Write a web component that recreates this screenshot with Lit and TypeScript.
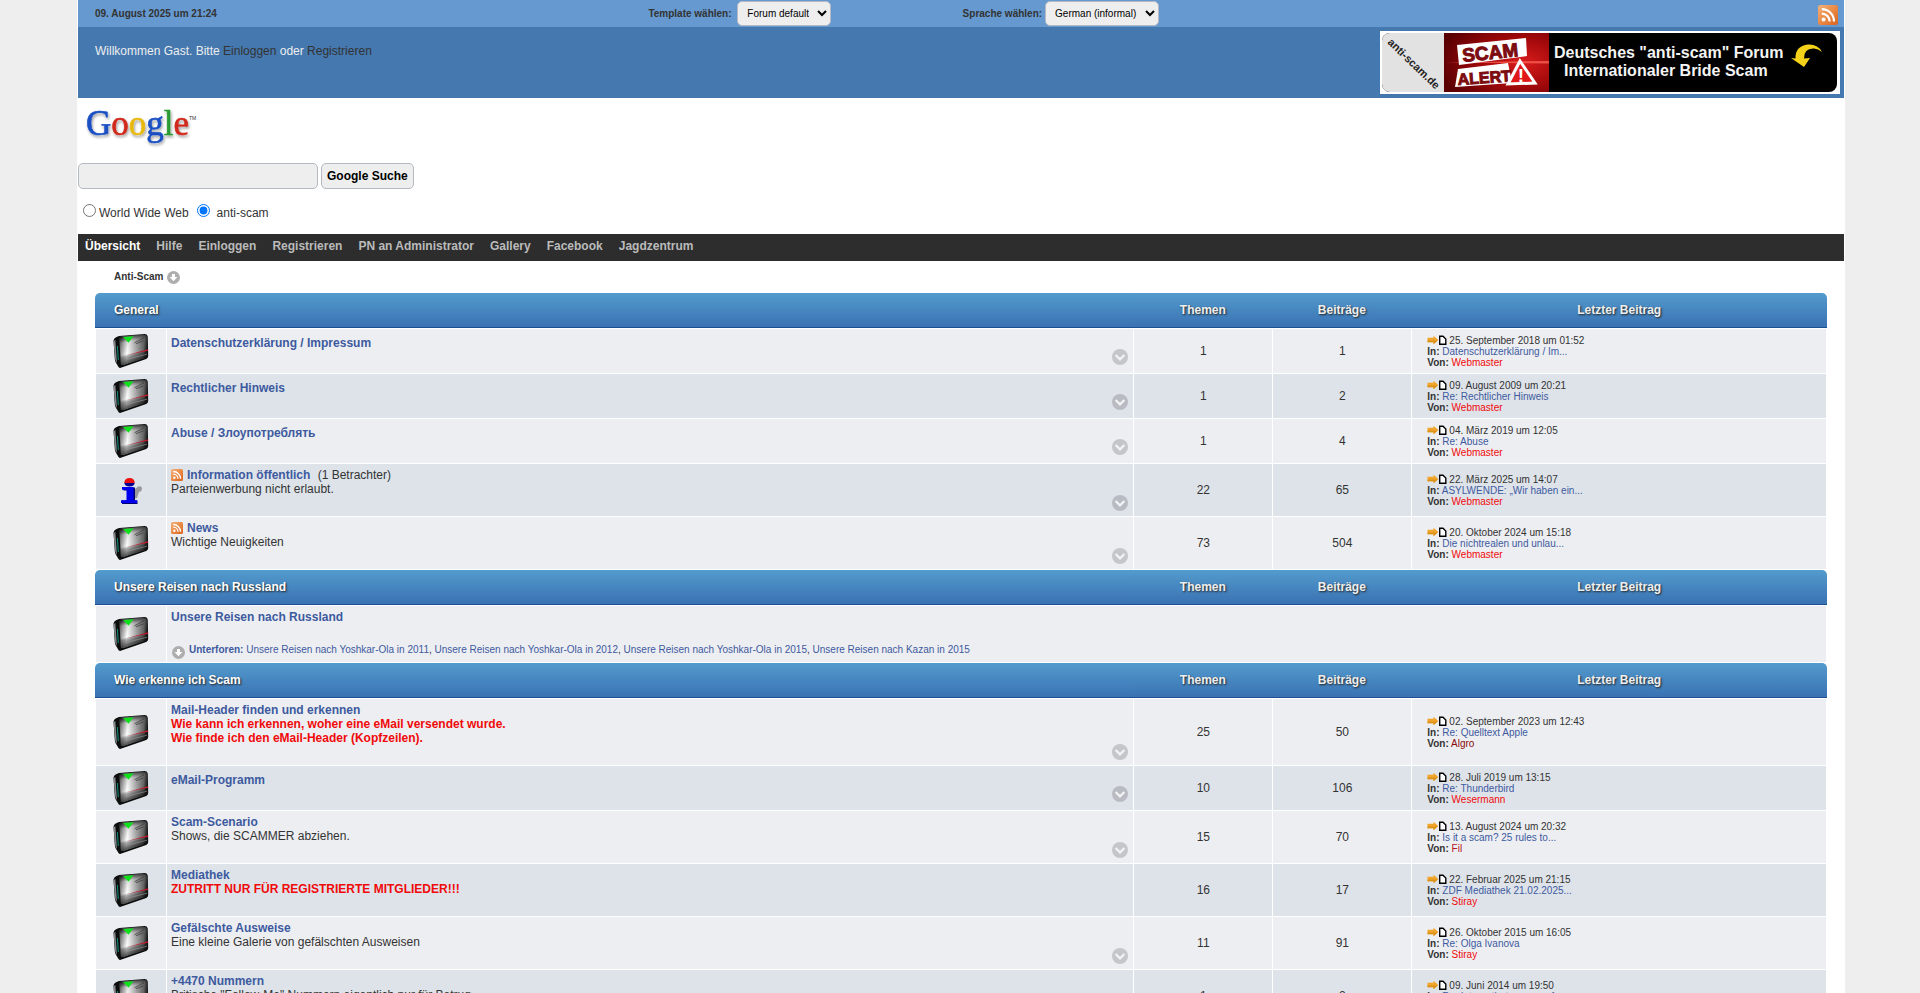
import { LitElement, html, css, svg, nothing, TemplateResult } from "lit";
import { customElement } from "lit/decorators.js";

interface LastPost {
  date: string;
  topic: string;
  author: string;
  tone?: string;
}

interface Board {
  name: string;
  lines?: string[];
  alert?: boolean;
  feed?: boolean;
  info?: boolean;
  viewers?: string;
  more?: boolean;
  topics?: number;
  posts?: number;
  last?: LastPost;
  sub?: string[];
}

interface Category {
  title: string;
  boards: Board[];
}

const CATEGORIES: Category[] = [
  {
    title: "General",
    boards: [
      { name: "Datenschutzerklärung / Impressum", more: true, topics: 1, posts: 1, last: { date: "25. September 2018 um 01:52", topic: "Datenschutzerklärung / Im...", author: "Webmaster" } },
      { name: "Rechtlicher Hinweis", more: true, topics: 1, posts: 2, last: { date: "09. August 2009 um 20:21", topic: "Re: Rechtlicher Hinweis", author: "Webmaster" } },
      { name: "Abuse / Злоупотреблять", more: true, topics: 1, posts: 4, last: { date: "04. März 2019 um 12:05", topic: "Re: Abuse", author: "Webmaster" } },
      { name: "Information öffentlich", feed: true, info: true, viewers: "(1 Betrachter)", lines: ["Parteienwerbung nicht erlaubt."], more: true, topics: 22, posts: 65, last: { date: "22. März 2025 um 14:07", topic: "ASYLWENDE: „Wir haben ein...", author: "Webmaster" } },
      { name: "News", feed: true, lines: ["Wichtige Neuigkeiten"], more: true, topics: 73, posts: 504, last: { date: "20. Oktober 2024 um 15:18", topic: "Die nichtrealen und unlau...", author: "Webmaster" } },
    ],
  },
  {
    title: "Unsere Reisen nach Russland",
    boards: [
      {
        name: "Unsere Reisen nach Russland",
        sub: [
          "Unsere Reisen nach Yoshkar-Ola in 2011",
          "Unsere Reisen nach Yoshkar-Ola in 2012",
          "Unsere Reisen nach Yoshkar-Ola in 2015",
          "Unsere Reisen nach Kazan in 2015",
        ],
      },
    ],
  },
  {
    title: "Wie erkenne ich Scam",
    boards: [
      { name: "Mail-Header finden und erkennen", alert: true, lines: ["Wie kann ich erkennen, woher eine eMail versendet wurde.", "Wie finde ich den eMail-Header (Kopfzeilen)."], more: true, topics: 25, posts: 50, last: { date: "02. September 2023 um 12:43", topic: "Re: Quelltext Apple", author: "Algro", tone: "maroon" } },
      { name: "eMail-Programm", more: true, topics: 10, posts: 106, last: { date: "28. Juli 2019 um 13:15", topic: "Re: Thunderbird", author: "Wesermann" } },
      { name: "Scam-Scenario", lines: ["Shows, die SCAMMER abziehen."], more: true, topics: 15, posts: 70, last: { date: "13. August 2024 um 20:32", topic: "Is it a scam? 25 rules to...", author: "Fil", tone: "crimson" } },
      { name: "Mediathek", alert: true, lines: ["ZUTRITT NUR FÜR REGISTRIERTE MITGLIEDER!!!"], topics: 16, posts: 17, last: { date: "22. Februar 2025 um 21:15", topic: "ZDF Mediathek 21.02.2025...", author: "Stiray" } },
      { name: "Gefälschte Ausweise", lines: ["Eine kleine Galerie von gefälschten Ausweisen"], more: true, topics: 11, posts: 91, last: { date: "26. Oktober 2015 um 16:05", topic: "Re: Olga Ivanova", author: "Stiray" } },
      { name: "+4470 Nummern", lines: ["Britische \"Follow-Me\" Nummern eigentlich nur für Betrug"], more: true, topics: 1, posts: 2, last: { date: "09. Juni 2014 um 19:50", topic: "Re: Internetbetrueger auf...", author: "Stiray" } },
    ],
  },
];

const NAV = ["Übersicht", "Hilfe", "Einloggen", "Registrieren", "PN an Administrator", "Gallery", "Facebook", "Jagdzentrum"];

const feedIcon = (size: number) => html`
  <svg class="feed" width=${size} height=${size} viewBox="0 0 20 20" aria-hidden="true">
    <defs>
      <linearGradient id="feed-fill" x1="0" y1="0" x2="1" y2="1">
        <stop offset="0" stop-color="#f3b27c" />
        <stop offset="0.5" stop-color="#ea8a45" />
        <stop offset="1" stop-color="#d9641f" />
      </linearGradient>
    </defs>
    <rect width="20" height="20" rx="2.5" fill="url(#feed-fill)" />
    <circle cx="5.6" cy="14.6" r="2" fill="#fff" />
    <path d="M3.8 8.6a7.8 7.8 0 0 1 7.8 7.8M3.8 4.2a12.2 12.2 0 0 1 12.2 12.2" fill="none" stroke="#fff" stroke-width="2.2" />
  </svg>`;

const downIcon = html`
  <svg class="down" width="13" height="13" viewBox="0 0 13 13" aria-hidden="true">
    <circle cx="6.5" cy="6.5" r="6.5" fill="#aeaeae" />
    <path d="M5 3h3v3h2.4L6.5 10.2 2.6 6H5z" fill="#fff" />
  </svg>`;

const chevronIcon = html`
  <svg width="16" height="16" viewBox="0 0 16 16" aria-hidden="true">
    <circle cx="8" cy="8" r="8" fill="#000" fill-opacity="0.17" />
    <path d="M3.6 6l4.4 4.4L12.4 6" fill="none" stroke="#f2f3f5" stroke-width="2.2" />
  </svg>`;

const folderIcon = html`
  <svg width="36" height="34" viewBox="0 0 36 34" role="img" aria-label="Keine neuen Beiträge">
    <defs>
      <linearGradient id="folder-face" gradientUnits="userSpaceOnUse" x1="7" y1="0" x2="35" y2="3">
        <stop offset="0" stop-color="#5a5a5a" />
        <stop offset="0.12" stop-color="#a0a0a0" />
        <stop offset="0.32" stop-color="#ffffff" />
        <stop offset="0.6" stop-color="#b0b0b0" />
        <stop offset="0.88" stop-color="#666" />
        <stop offset="1" stop-color="#222" />
      </linearGradient>
      <linearGradient id="folder-shade" gradientUnits="userSpaceOnUse" x1="18" y1="1" x2="24" y2="30">
        <stop offset="0" stop-color="#000" stop-opacity="0.75" />
        <stop offset="0.2" stop-color="#000" stop-opacity="0.1" />
        <stop offset="0.6" stop-color="#000" stop-opacity="0" />
        <stop offset="0.68" stop-color="#000" stop-opacity="0.3" />
        <stop offset="0.88" stop-color="#000" stop-opacity="0.6" />
        <stop offset="1" stop-color="#000" stop-opacity="0.85" />
      </linearGradient>
    </defs>
    <path d="M0.500 6.500Q0.700 4.600 3 3.200L6 2 32 0q2.500 0 2.700 2.500L35.200 22q0 2-2 2.900L8.500 33.600q-2 .8-3-.6L2.800 28.500Q2 27 1.800 25z" fill="#0c0e0e" />
    <path d="M0.500 7.500l1.800-1.700L4 29 2.300 26z" fill="#85898b" />
    <path d="M4.400 12l.9 14" stroke="#0f8f7c" stroke-width="1" />
    <path d="M6.300 4.800Q6.500 2.800 8.500 2.600L32 1q1.900 0 2.100 2l.4 18.500q0 1.500-1.500 2L10 31Q8 31.500 7.900 29.500z" fill="url(#folder-face)" />
    <path d="M6.300 4.800Q6.500 2.800 8.500 2.600L32 1q1.900 0 2.100 2l.4 18.500q0 1.500-1.500 2L10 31Q8 31.500 7.900 29.500z" fill="url(#folder-shade)" />
    <path d="M10 3L20.500 2.200 15.500 8.800z" fill="#10e01c" />
    <path d="M21.500 8.800l9.500-5M23 9.800l7.500-3" stroke="#333" stroke-width="0.700" />
    <path d="M13 25.600L34 20.200" stroke="#999" stroke-width="0.600" />
    <path d="M14 21.300L27 17.500 35.200 15.300v1.500L26 18.600z" fill="#c4162a" />
  </svg>`;

const infoIcon = html`
  <svg class="info" width="24" height="28" viewBox="0 0 24 28" role="img" aria-label="Information">
    <g transform="translate(2 2)">
      <path d="M13 12l4-3.500q4-1 4 2t-3 3.500l-2 6-3 1z" fill="#9a9a9e" />
      <path d="M2.500 9.500h11.500v13h2.500V26H1v-3.500h5.500V12.500H2.500z" fill="#000070" />
      <path d="M1 9h11.500v13.200H16V25H0v-2.800h5.500V11.800H1z" fill="#0000ee" />
      <path d="M3.300 4.500h10.400Q13.500 8.500 8.500 8.500T3.300 4.500z" fill="#000090" />
      <path d="M3.300 5Q3.500 0 8.500 0t5.200 5z" fill="#ee1010" />
    </g>
  </svg>`;

const postIcons = html`
  <svg class="goto" width="20" height="10" viewBox="0 0 20 10" aria-hidden="true">
    <path d="M0.500 2.800h6V0.800L11.300 5 6.500 9.200V7.200h-6z" fill="#f0a52a" />
    <path d="M0.500 5.500h10.300L6.500 9.200V7.200h-6z" fill="#dc931c" />
    <path d="M12.700 1.200h3.300l2.800 2.800V9.200h-6.100z" fill="#fff" stroke="#000" stroke-width="1.400" />
  </svg>`;

const bannerArt = svg`
  <defs>
    <radialGradient id="banner-red" cx="0.75" cy="0.5" r="0.8">
      <stop offset="0" stop-color="#d81c1c" />
      <stop offset="0.5" stop-color="#a0080a" />
      <stop offset="1" stop-color="#5a0003" />
    </radialGradient>
    <clipPath id="banner-clip"><rect x="2" y="2" width="455" height="59" rx="8" /></clipPath>
  </defs>
  <rect width="460" height="63" fill="#fff" />
  <g clip-path="url(#banner-clip)">
    <rect width="460" height="63" fill="#000" />
    <rect width="64" height="63" fill="#e2e2e2" />
    <rect x="64" width="105" height="63" fill="url(#banner-red)" />
    <path d="M64 31.500L169 30v2.500z" fill="#ff6a5a" opacity="0.7" />
  </g>
  <text transform="translate(7 12) rotate(44)" font-size="11" font-weight="700" fill="#222">anti-scam.de</text>
  <path d="M77 14L146 7l1 18L79 34z" fill="#fff" />
  <path d="M78 38L128 32l4 20L75 56z" fill="#fff" />
  <text transform="translate(83 31) rotate(-6)" font-size="19" font-weight="700" fill="#7c0c10" stroke="#7c0c10">SCAM</text>
  <text transform="translate(78 54) rotate(-4)" font-size="16" font-weight="700" fill="#7c0c10" stroke="#7c0c10">ALERT</text>
  <path d="M140 30l15 22-27 1z" fill="#e01818" stroke="#fff" stroke-width="3" />
  <text x="141" y="51" font-size="19" font-weight="700" text-anchor="middle" fill="#fff">!</text>
  <text x="174" y="27" font-size="16" font-weight="700" fill="#f4f4f4">Deutsches "anti-scam" Forum</text>
  <text x="184" y="45" font-size="16" font-weight="700" fill="#f4f4f4">Internationaler Bride Scam</text>
  <path d="M442 21Q438 13 428 13.500 415 15 415.500 27.500L411 27l13 9 6-9-6 0.500Q424 17 434 17.500q4 0 8 3.500z" fill="#f5d21a" />`;

@customElement("app-root")
export class AppRoot extends LitElement {
  static styles = css`
    :host {
      display: block;
      height: 100vh;
      overflow: hidden;
      background: #eee;
      color: #333;
      font: 12px/14px "Liberation Sans", Arial, sans-serif;
    }
    * { box-sizing: border-box; }
    a { text-decoration: none; color: #3d5a9e; }
    svg { display: block; flex: none; }
    .page {
      min-height: 100%;
      margin: 0 75px 0 77px;
      border: solid #fff;
      border-width: 0 1px;
      background: #fff;
    }
    .topbar {
      display: grid;
      grid-template-columns: 317fr 180fr 490fr auto;
      align-items: center;
      height: 27px;
      padding: 0 6px 0 17px;
      background: #6599cf;
      font-size: 10px;
      font-weight: 700;
    }
    .topbar .rss { padding-top: 2px; }
    .picker { display: flex; align-items: center; gap: 3px; }
    select, .query, .search {
      border: 1px solid #b4b9c4;
      border-radius: 5px;
      background: #eee;
      color: #000;
      font-family: inherit;
    }
    select { height: 25px; padding: 4px 5px; font-size: 10px; }
    .header {
      display: flex;
      justify-content: space-between;
      height: 71px;
      padding: 4px 4px 4px 17px;
      background: #4478ae;
      color: #eee;
    }
    .welcome { margin: 0; padding-top: 13px; }
    .welcome a { color: #333; }
    svg text { font-family: "Liberation Sans", Arial, sans-serif; }
    .google { padding-bottom: 14px; }
    svg.logo { margin-left: 4px; }
    .logo .word { font-family: "Liberation Serif", "Times New Roman", serif; }
    .row { display: flex; align-items: center; gap: 3px; }
    .query { width: 240px; height: 26px; padding: 4px; }
    .search { height: 26px; padding: 0 5px; font-size: 12px; font-weight: 700; }
    .scope { margin-top: 14px; padding: 0 5px; height: 17px; }
    .scope input { width: 13px; height: 13px; margin: 0 0 2px; }
    .scope label { margin-right: 5px; padding-top: 3px; }
    .scope .near { padding-left: 4px; }
    .nav {
      display: flex;
      gap: 16px;
      height: 27px;
      padding: 5px 7px;
      background: #2d2d2d;
      font-weight: 700;
    }
    .nav a { color: #bbb; }
    .nav a.current { color: #fff; }
    .crumb {
      display: flex;
      align-items: center;
      gap: 4px;
      height: 32px;
      padding-left: 36px;
      font-size: 10px;
      font-weight: 700;
    }
    .crumb a { color: #333; }
    .boards { margin: 0 17px; }
    table {
      width: 100%;
      table-layout: fixed;
      border-collapse: separate;
      border-spacing: 0;
      border-bottom: 1px solid #fff;
    }
    .c-icon { width: 71px; }
    .c-num { width: 139px; }
    .c-last { width: 24%; }
    th {
      height: 35px;
      padding: 0;
      background: linear-gradient(#539bcd, #3a72b3);
      border-bottom: 1px solid #1d4f92;
      color: #eee;
      text-shadow: 1px 1px 2px #222;
      font-weight: 700;
      text-align: center;
    }
    th:first-child { padding-left: 19px; color: #fff; text-align: left; border-top-left-radius: 5px; }
    th:last-child { border-top-right-radius: 5px; }
    td {
      padding: 0;
      border: solid #fff;
      border-width: 1px 0 0 1px;
      background: #edeef2;
      vertical-align: middle;
    }
    td:last-child { border-right-width: 1px; }
    tr:nth-child(even) td { background: #dee3ea; }
    .state svg { margin: 5px auto; }
    .num { text-align: center; }
    td.board { padding: 4px 5px 5px 4px; }
    .title { display: flex; align-items: center; gap: 4px; }
    .title a { font-weight: 700; }
    .alert { color: #f00a0a; font-weight: 700; }
    .tools { display: flex; justify-content: flex-end; height: 16px; margin-top: -1px; }
    .tools button { padding: 0; border: 0; background: none; line-height: 0; }
    .sub { display: flex; gap: 4px; margin-top: 20px; padding-left: 1px; height: 13px; font-size: 10px; line-height: 11px; }
    .sub .down { margin-top: 2px; }
    .sub b { color: #3d5a9e; }
    td.last { padding-left: 15px; font-size: 10px; line-height: 11px; }
    .when { display: flex; align-items: center; gap: 2px; }
    .author { color: #f00a0a; }
    .maroon { color: #8b0a0a; }
    .crimson { color: #b81420; }
  `;

  private renderBoard(b: Board): TemplateResult {
    return html`
      <tr>
        <td class="state">${b.info ? infoIcon : folderIcon}</td>
        <td class="board" colspan=${b.last ? 1 : 4}>
          <div class="title">
            ${b.feed ? feedIcon(12) : nothing}<a href="#">${b.name}</a>
            ${b.viewers ? html`<span>&nbsp;${b.viewers}</span>` : nothing}
          </div>
          ${(b.lines ?? []).map((l) => html`<div class=${b.alert ? "alert" : "text"}>${l}</div>`)}
          ${b.sub
            ? html`<div class="sub">
                ${downIcon}
                <span><b>Unterforen:</b> ${b.sub.map((s, i) => html`${i ? ", " : ""}<a href="#">${s}</a>`)}</span>
              </div>`
            : html`<div class="tools">
                ${b.more ? html`<button type="button" aria-label="Mehr">${chevronIcon}</button>` : nothing}
              </div>`}
        </td>
        ${b.last
          ? html`
              <td class="num">${b.topics}</td>
              <td class="num">${b.posts}</td>
              <td class="last">
                <div class="when">${postIcons}<span>${b.last.date}</span></div>
                <div><b>In:</b> <a href="#">${b.last.topic}</a></div>
                <div><b>Von:</b> <a href="#" class="author ${b.last.tone ?? ""}">${b.last.author}</a></div>
              </td>`
          : nothing}
      </tr>`;
  }

  private renderCategory(c: Category): TemplateResult {
    return html`
      <table>
        <colgroup>
          <col class="c-icon" /><col /><col class="c-num" /><col class="c-num" /><col class="c-last" />
        </colgroup>
        <thead>
          <tr>
            <th colspan="2">${c.title}</th>
            <th>Themen</th>
            <th>Beiträge</th>
            <th>Letzter Beitrag</th>
          </tr>
        </thead>
        <tbody>${c.boards.map((b) => this.renderBoard(b))}</tbody>
      </table>`;
  }

  render() {
    return html`
      <div class="page">
        <div class="topbar">
          <span>09. August 2025 um 21:24</span>
          <div class="picker">
            <label for="template">Template wählen:&nbsp;</label>
            <select id="template"><option>Forum default</option></select>
          </div>
          <div class="picker">
            <label for="language">Sprache wählen:</label>
            <select id="language"><option>German (informal)</option></select>
          </div>
          <a class="rss" href="#" aria-label="RSS">${feedIcon(20)}</a>
        </div>
        <header class="header">
          <p class="welcome">Willkommen Gast. Bitte <a href="#">Einloggen</a> oder <a href="#">Registrieren</a></p>
          <svg width="460" height="63" viewBox="0 0 460 63" role="img" aria-label="Banner">${bannerArt}</svg>
        </header>
        <form class="google" @submit=${(e: Event) => e.preventDefault()}>
          <svg class="logo" width="120" height="65" viewBox="0 0 120 65" role="img" aria-label="Google">
            <defs>
              <filter id="logo-shadow" x="-10%" y="-10%" width="130%" height="140%">
                <feDropShadow dx="1" dy="2" stdDeviation="1.500" flood-color="#000" flood-opacity="0.4" />
              </filter>
            </defs>
            <text class="word" x="4" y="37" font-size="35" stroke-width="0.600" filter="url(#logo-shadow)"><tspan fill="#1a4fc4" stroke="#1a4fc4">G</tspan><tspan fill="#d0291c" stroke="#d0291c">o</tspan><tspan fill="#e8b90f" stroke="#e8b90f">o</tspan><tspan fill="#1a4fc4" stroke="#1a4fc4">g</tspan><tspan fill="#2c9a35" stroke="#2c9a35">l</tspan><tspan fill="#d0291c" stroke="#d0291c">e</tspan></text>
            <text x="107" y="22" font-size="5" fill="#333">TM</text>
          </svg>
          <div class="row">
            <input class="query" type="text" aria-label="Suchbegriff" />
            <button class="search" type="submit">Google Suche</button>
          </div>
          <div class="row scope">
            <input type="radio" name="scope" id="www" /><label for="www">World Wide Web</label>
            <input type="radio" name="scope" id="site" checked /><label class="near" for="site">anti-scam</label>
          </div>
        </form>
        <nav class="nav">
          ${NAV.map((n, i) => html`<a href="#" class=${i ? "" : "current"}>${n}</a>`)}
        </nav>
        <div class="crumb"><a href="#">Anti-Scam</a>${downIcon}</div>
        <main class="boards">${CATEGORIES.map((c) => this.renderCategory(c))}</main>
      </div>`;
  }
}
